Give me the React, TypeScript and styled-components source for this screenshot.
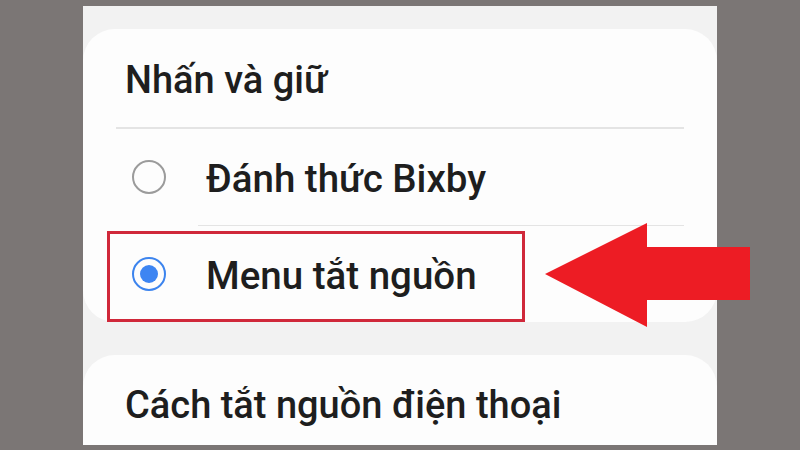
import React from "react";
import styled, { createGlobalStyle } from "styled-components";

const GlobalStyle = createGlobalStyle`
  html, body {
    margin: 0;
    padding: 0;
    background: #7b7675;
  }
  body {
    font-family: Roboto, "Noto Sans", "Liberation Sans", sans-serif;
  }
`;

const Page = styled.div`
  position: relative;
  width: 800px;
  height: 450px;
  overflow: hidden;
  background: #7b7675;
  padding-top: 6px;
  padding-left: 83px;
  box-sizing: border-box;
`;

const Screen = styled.div`
  width: 634px;
  height: 439px;
  background: #f2f2f2;
  overflow: hidden;
  box-sizing: border-box;
  padding-top: 23px;
  display: flex;
  flex-direction: column;
  gap: 33px;
`;

const Card = styled.div<{ $height: number }>`
  flex: none;
  height: ${(p) => p.$height}px;
  background: #fdfdfd;
  border-radius: 32px;
  display: flex;
  flex-direction: column;
`;

const Title = styled.div<{ $size: number; $top: number }>`
  padding: ${(p) => p.$top}px 0 0 42px;
  font-size: ${(p) => p.$size}px;
  font-weight: 500;
  line-height: 48px;
  color: #1e1e1e;
`;

const Divider = styled.div<{ $left: number }>`
  height: 2px;
  background: #e4e4e4;
  margin: 0 33px 0 ${(p) => p.$left}px;
`;

const Option = styled.div`
  height: 96px;
  display: flex;
  align-items: center;
  padding-left: 49px;
`;

const Radio = styled.span<{ $checked?: boolean }>`
  width: 34px;
  height: 34px;
  box-sizing: border-box;
  border-radius: 50%;
  border: 2px solid ${(p) => (p.$checked ? "#3c84ee" : "#9b9b9b")};
  display: flex;
  align-items: center;
  justify-content: center;
  flex: none;

  &::after {
    content: "";
    display: ${(p) => (p.$checked ? "block" : "none")};
    width: 18px;
    height: 18px;
    border-radius: 50%;
    background: #3d85f2;
  }
`;

const Label = styled.span`
  margin-left: 40px;
  font-size: 38.5px;
  font-weight: 500;
  line-height: 44px;
  color: #1e1e1e;
  padding-top: 4px;
`;

const Highlight = styled.div`
  position: absolute;
  left: 107px;
  top: 231px;
  width: 418px;
  height: 91px;
  box-sizing: border-box;
  border: 3px solid #d0283a;
`;

const Arrow = styled.svg`
  position: absolute;
  left: 545px;
  top: 223px;
`;

const App: React.FC = () => {
  return (
    <>
      <GlobalStyle />
      <Page>
        <Screen>
          <Card $height={293}>
            <Title $size={38} $top={27}>
              Nhấn và giữ
            </Title>
            <Divider $left={33} style={{ marginTop: 23 }} />
            <Option>
              <Radio />
              <Label>Đánh thức Bixby</Label>
            </Option>
            <Divider $left={115} />
            <Option>
              <Radio $checked />
              <Label>Menu tắt nguồn</Label>
            </Option>
          </Card>
          <Card $height={140}>
            <Title $size={38} $top={26}>
              Cách tắt nguồn điện thoại
            </Title>
          </Card>
        </Screen>
        <Highlight />
        <Arrow width="205" height="104" viewBox="0 0 205 104">
          <polygon
            points="0,51 102,0 102,24 205,24 205,77 102,77 102,104"
            fill="#ed1c24"
          />
        </Arrow>
      </Page>
    </>
  );
};

export default App;
